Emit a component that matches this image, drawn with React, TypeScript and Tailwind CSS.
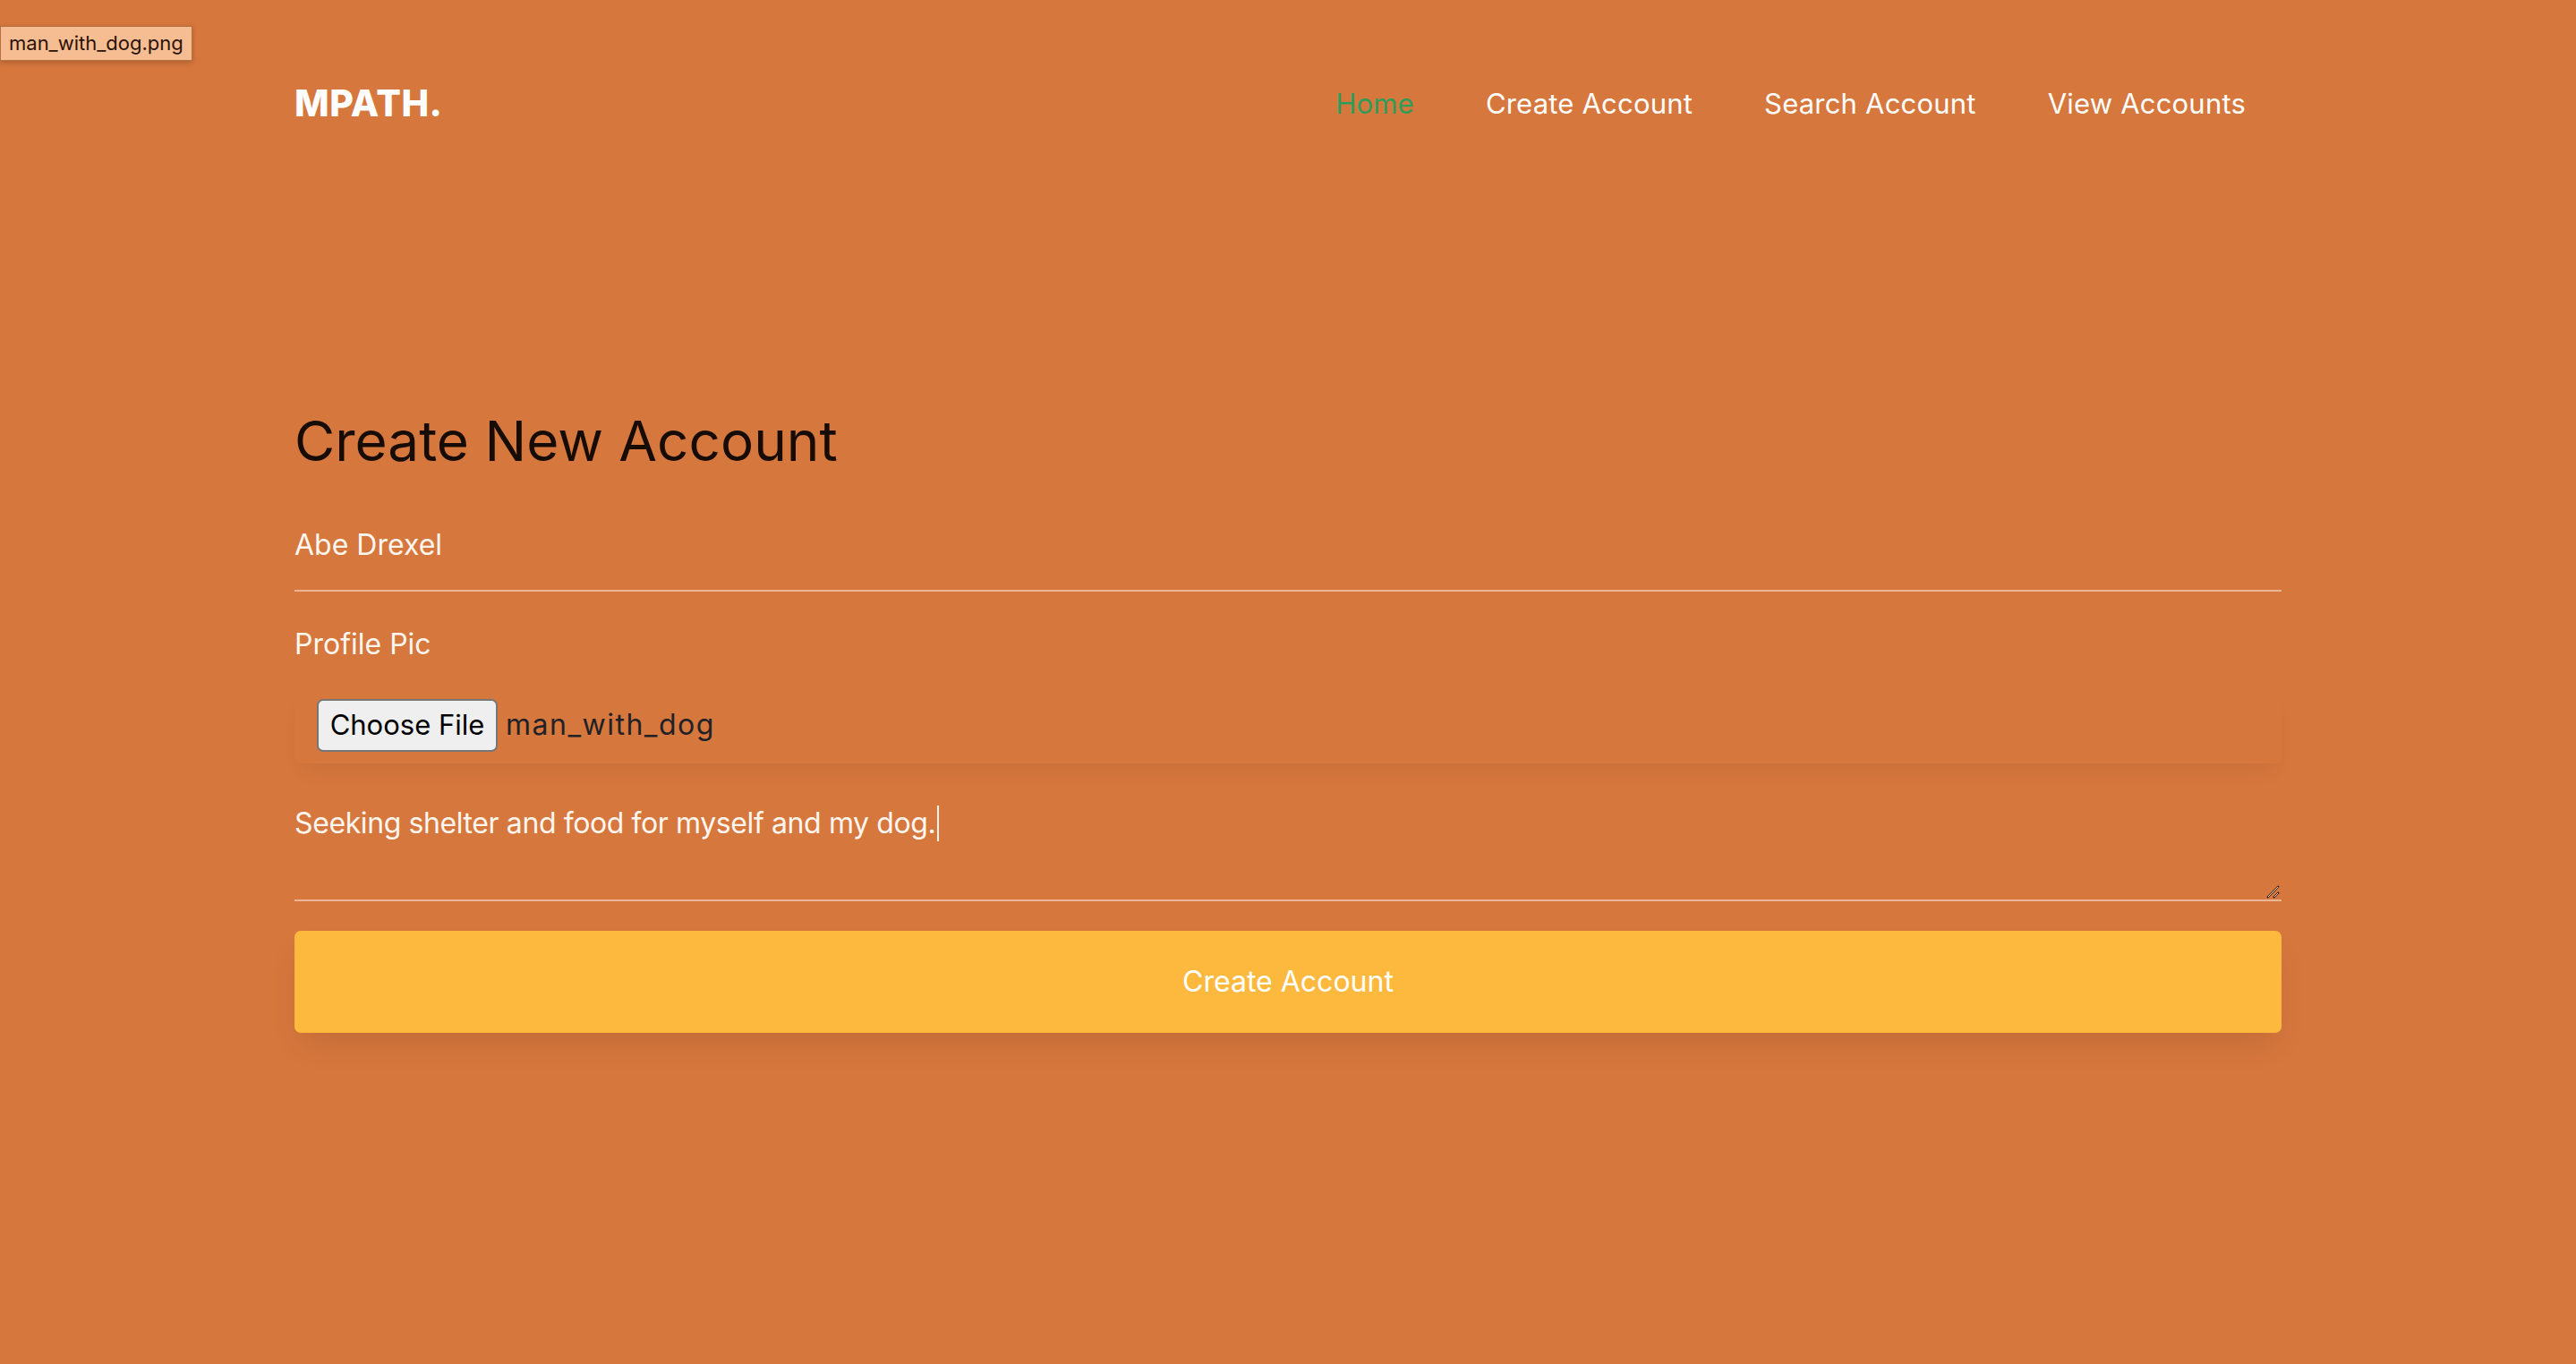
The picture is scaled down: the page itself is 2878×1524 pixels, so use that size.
import React from 'react'

const navLinks = ['Home', 'Create Account', 'Search Account', 'View Accounts']

const App = () => {
  return (
    <div className="relative min-h-screen bg-[#d6773d] font-['Inter',sans-serif] text-white">
      {/* hover tooltip from the file picker */}
      <div className="absolute left-0 top-[29px] h-[39px] w-[215px] border border-[#b5703f] bg-[#f6bd92] pl-[9px] text-[22px] leading-[37px] text-[#2b1205] shadow-[0_2px_6px_rgba(0,0,0,0.2)]">
        man_with_dog.png
      </div>

      <div className="mx-auto w-[2220px]">
        <header className="flex h-[232px] items-center justify-between">
          <a className="text-[41px] font-extrabold tracking-[0.5px] text-white">MPATH.</a>
          <nav>
            <ul className="flex items-center">
              {navLinks.map((l, i) => (
                <li key={l}>
                  <a className={`block px-[40px] text-[31px] tracking-[0.2px] ${i === 0 ? 'text-[#2f9d5a]' : 'text-white'}`}>{l}</a>
                </li>
              ))}
            </ul>
          </nav>
        </header>

        <main>
          <h2 className="mt-[222px] text-[62px] leading-[77px] text-[#170c03]">Create New Account</h2>

          <form>
            <div className="mt-[28px] flex h-[102px] items-center border-b-2 border-[#ebb695] text-[32px] text-[#fff6ef]">
              Abe Drexel
            </div>

            <label className="mt-[35px] block text-[32px] leading-[48px] text-[#fff6ef]">Profile Pic</label>

            <div className="mt-[23px] flex h-[86px] items-center rounded-[8px] pl-[25px] shadow-[0_16px_26px_-10px_rgba(0,0,0,0.07)]">
              <button
                type="button"
                className="flex h-[59px] w-[202px] items-center justify-center rounded-[7px] border-2 border-[#767676] bg-[#efefef] text-[31px] text-black"
              >
                Choose File
              </button>
              <span className="ml-[9px] text-[32px] tracking-[1.5px] text-[#222226]">man_with_dog</span>
            </div>

            <div className="relative h-[154px] border-b-2 border-[#ebb695] pt-[43px]">
              <div className="flex items-center text-[32px] leading-[48px] tracking-[-0.4px] text-[#fff6ef]">
                Seeking shelter and food for myself and my dog.
                <span className="ml-[2px] inline-block h-[40px] w-[2px] bg-[#fff6ef]" />
              </div>
              <svg className="absolute bottom-[1px] right-[2px]" width="16" height="16" viewBox="0 0 16 16">
                <line x1="2" y1="15" x2="15" y2="2" stroke="#3a1c0a" strokeWidth="2" />
                <line x1="3" y1="14" x2="14" y2="3" stroke="#f3d6c4" strokeWidth="1" />
                <line x1="9" y1="15" x2="15" y2="9" stroke="#3a1c0a" strokeWidth="2" />
                <line x1="10" y1="14" x2="14" y2="10" stroke="#f3d6c4" strokeWidth="1" />
              </svg>
            </div>

            <button
              type="button"
              className="mt-[33px] flex h-[114px] w-full items-center justify-center rounded-[7px] bg-[#fdb93e] text-[32px] text-white shadow-[0_18px_36px_-8px_rgba(0,0,0,0.1)]"
            >
              Create Account
            </button>
          </form>
        </main>
      </div>
    </div>
  )
}

export default App
